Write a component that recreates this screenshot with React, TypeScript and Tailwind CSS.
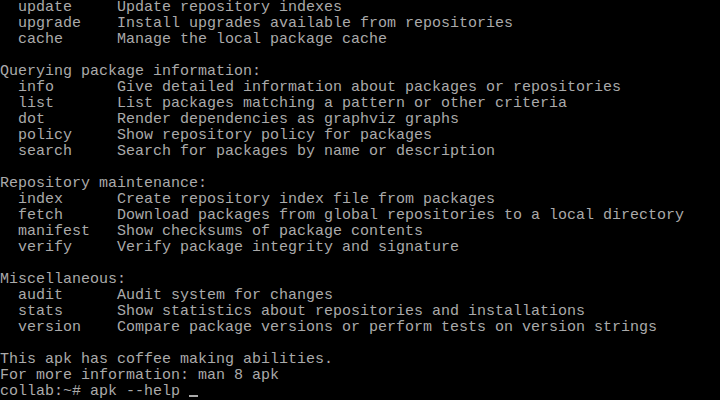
const lines = [
  "  update     Update repository indexes",
  "  upgrade    Install upgrades available from repositories",
  "  cache      Manage the local package cache",
  "",
  "Querying package information:",
  "  info       Give detailed information about packages or repositories",
  "  list       List packages matching a pattern or other criteria",
  "  dot        Render dependencies as graphviz graphs",
  "  policy     Show repository policy for packages",
  "  search     Search for packages by name or description",
  "",
  "Repository maintenance:",
  "  index      Create repository index file from packages",
  "  fetch      Download packages from global repositories to a local directory",
  "  manifest   Show checksums of package contents",
  "  verify     Verify package integrity and signature",
  "",
  "Miscellaneous:",
  "  audit      Audit system for changes",
  "  stats      Show statistics about repositories and installations",
  "  version    Compare package versions or perform tests on version strings",
  "",
  "This apk has coffee making abilities.",
  "For more information: man 8 apk",
]

export default function App() {
  return (
    <div className="w-[720px] h-[400px] overflow-hidden bg-black text-[#aaaaaa] font-['Liberation_Mono',monospace] text-[15px] leading-[16px]">
      {lines.map((line, i) => (
        <div key={i} className="h-4 whitespace-pre">
          {line}
        </div>
      ))}
      <div className="h-4 whitespace-pre">
        collab:~# apk --help <span className="inline-block w-[9px] h-[2px] bg-[#aaaaaa] align-[-2px]"></span>
      </div>
    </div>
  )
}
